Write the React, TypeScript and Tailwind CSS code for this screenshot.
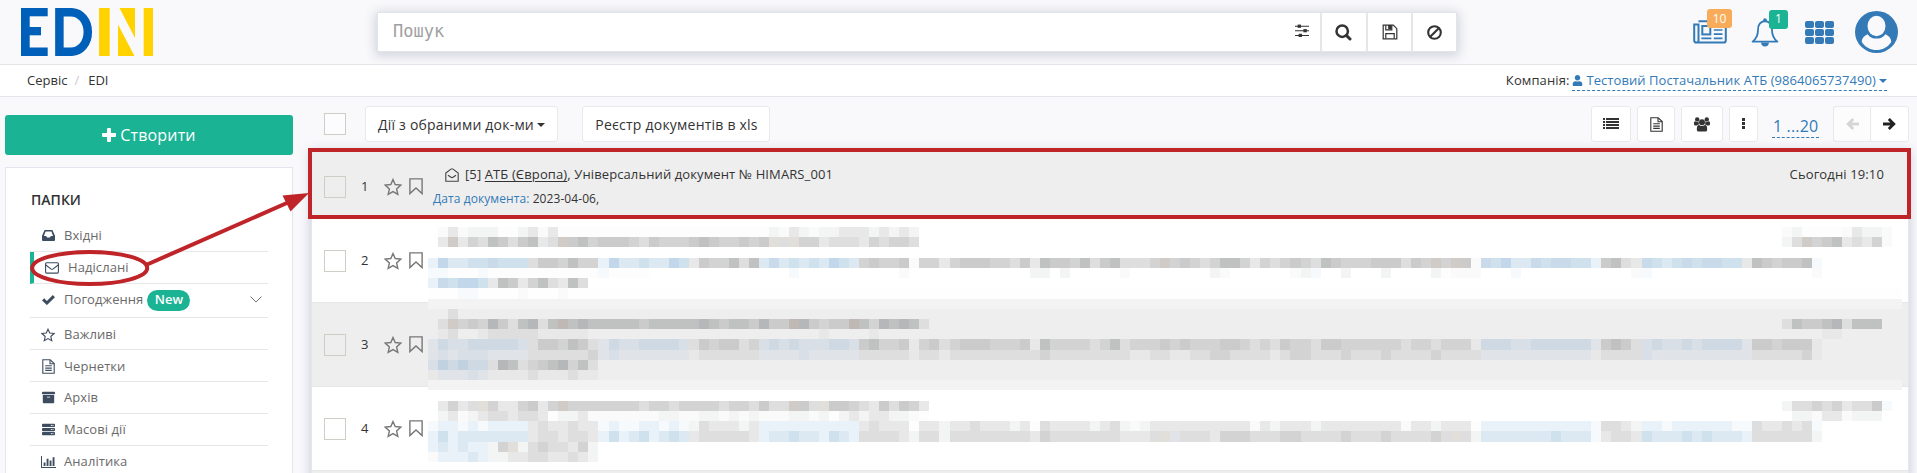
import type { ReactNode } from 'react';
import { FaArchive, FaServer, FaUser } from 'react-icons/fa';

/* ---------- icons ---------- */

function Logo() {
  return (
    <svg width="133" height="48" viewBox="0 0 133 48" aria-label="EDIN">
      <g fill="#005fb9">
        <rect x="0" y="0" width="8.7" height="48" />
        <rect x="0" y="0" width="26.7" height="8.3" />
        <rect x="0" y="19" width="20" height="8.3" />
        <rect x="0" y="39.5" width="26.7" height="8.5" />
      </g>
      <path d="M38.4 4.2H49.5C60 4.2 66.8 13 66.8 24S60 43.8 49.5 43.8H38.4Z" fill="none" stroke="#005fb9" strokeWidth="8.5" />
      <g fill="#ffd200">
        <rect x="78" y="0" width="10.7" height="48" />
        <polygon points="98.5,0 114,0 114,30" />
        <polygon points="97,16.5 97,48 113.5,48" />
        <rect x="122.7" y="0" width="9.3" height="48" />
      </g>
    </svg>
  );
}

function Sliders() {
  return (
    <svg width="14" height="14" viewBox="0 0 14 14" fill="#333">
      <path d="M0 1.7h14v1.1H0zM0 6.2h14v1.1H0zM0 10.9h14V12H0z" />
      <rect x="2.6" y=".6" width="3.4" height="3.2" />
      <rect x="8.4" y="5.1" width="3.4" height="3.2" />
      <rect x="3.6" y="9.8" width="3.4" height="3.2" />
    </svg>
  );
}

function Magnifier() {
  return (
    <svg width="17" height="17" viewBox="0 0 17 17" fill="none" stroke="#333" strokeWidth="2.5" strokeLinecap="round">
      <circle cx="7.2" cy="7.2" r="5.7" />
      <path d="M11.6 11.6 15 15" strokeWidth="3" />
    </svg>
  );
}

function Ban() {
  return (
    <svg width="15" height="15" viewBox="0 0 15 15" fill="none" stroke="#333" strokeWidth="2.1">
      <circle cx="7.5" cy="7.5" r="6.3" />
      <path d="M3.2 11.8 11.8 3.2" />
    </svg>
  );
}

function Floppy() {
  return (
    <svg width="16" height="16" viewBox="0 0 16 16" fill="none" stroke="#333" strokeWidth="1.2">
      <path d="M1.2 1.2H11.3L14.8 4.7V14.8H1.2Z" />
      <path d="M3.8 14.6V9.6H12.2V14.6" />
      <path d="M3.8 1.4V5.9H9.8V1.4" />
      <path d="M6.8 1.6h2.2v3H6.8z" fill="#333" />
    </svg>
  );
}

function Plus() {
  return (
    <svg width="14" height="14" viewBox="0 0 14 14" fill="#fff">
      <rect x="0" y="5" width="14" height="4" rx="1" />
      <rect x="5" y="0" width="4" height="14" rx="1" />
    </svg>
  );
}

function Arrow({ left }: { left?: boolean }) {
  return (
    <svg width="13" height="12" viewBox="0 0 13 12" fill="none" stroke="currentColor" strokeWidth="2.8" className={left ? 'rotate-180' : ''}>
      <path d="M0 6H10.5M5.8 1 10.8 6 5.8 11" />
    </svg>
  );
}

function ListIcon() {
  return (
    <svg width="16" height="12" viewBox="0 0 16 12" fill="#333" shapeRendering="crispEdges">
      <path d="M0 0h2v2H0zM3 0h13v2H3zM0 3h2v2H0zM3 3h13v2H3zM0 6h2v2H0zM3 6h13v2H3zM0 9h2v2H0zM3 9h13v2H3z" />
    </svg>
  );
}

function Group() {
  return (
    <svg width="16" height="15" viewBox="0 0 16 15" fill="#333">
      <circle cx="3.2" cy="2.4" r="2.2" />
      <circle cx="12.8" cy="2.4" r="2.2" />
      <path d="M0 7.2V5.8Q0 4.2 1.2 4.2Q3 5.4 4.6 4.6Q4.4 6.2 5.2 7.4Q3.6 7.4 2.8 8.4H1.4Q0 8.4 0 7.2ZM16 7.2V5.8Q16 4.2 14.8 4.2Q13 5.4 11.4 4.6Q11.6 6.2 10.8 7.4Q12.4 7.4 13.2 8.4H14.6Q16 8.4 16 7.2Z" />
      <circle cx="8" cy="5.2" r="3" />
      <path d="M2.8 12.4Q2.8 8 5 8Q8 10 11 8Q13.2 8 13.2 12.4Q13.2 14.6 11.4 14.6H4.6Q2.8 14.6 2.8 12.4Z" />
    </svg>
  );
}

function Tray() {
  return (
    <svg width="13" height="11" viewBox="0 0 13 11" fill="#3d4d5f" fillRule="evenodd">
      <path d="M2.6 0H10.4L13 5.8V10Q13 11 12 11H1Q0 11 0 10V5.8ZM3.6 1.6 1.9 5.9H4.2L5 7.5H8L8.8 5.9H11.1L9.4 1.6Z" />
    </svg>
  );
}

function Check() {
  return (
    <svg width="13" height="10" viewBox="0 0 13 10" fill="none" stroke="#3d4d5f" strokeWidth="3">
      <path d="M1.1 4.4 4.9 8 11.9 1.2" />
    </svg>
  );
}

function FileLines({ color }: { color: string }) {
  return (
    <svg width="13" height="15" viewBox="0 0 13 15" fill="none" stroke={color} strokeWidth="1.1">
      <path d="M.8.8H8.2L12.2 4.6V14.2H.8Z" />
      <path d="M8 .9V4.8H12.1M3.2 6.8h6.6M3.2 9.1h6.6M3.2 11.4h6.6" />
    </svg>
  );
}

function Envelope() {
  return (
    <svg width="14" height="12" viewBox="0 0 14 12" fill="none" stroke="#3d4d5f" strokeWidth="1.1">
      <rect x=".6" y=".7" width="12.8" height="10.4" rx="1" />
      <path d="M.8 3 5.8 6.9Q7 7.7 8.2 6.9L13.2 3" />
    </svg>
  );
}

function OpenEnvelope() {
  return (
    <svg width="14" height="14" viewBox="0 0 14 14" fill="none" stroke="#444" strokeWidth="1.1">
      <path d="M.8 5 6 1.1Q7 .4 8 1.1L13.2 5V13.2H.8Z" />
      <path d="M3 7.2 6 9.3Q7 10 8 9.3L11 7.2" />
    </svg>
  );
}

function Star({ size, color, width = 1.4 }: { size: number; color: string; width?: number }) {
  return (
    <svg width={size} height={size} viewBox="0 0 18 18" fill="none" stroke={color} strokeWidth={width}>
      <path d="M9 1.5 11.2 6.5 16.8 7.1 12.6 10.9 13.8 16.4 9 13.6 4.2 16.4 5.4 10.9 1.2 7.1 6.8 6.5Z" />
    </svg>
  );
}

function Bookmark() {
  return (
    <svg width="14" height="17" viewBox="0 0 14 17" fill="none" stroke="#777" strokeWidth="1.4">
      <path d="M.9.9H13.1V15.6L7 9.9.9 15.6Z" />
    </svg>
  );
}

function BarChart() {
  return (
    <svg width="15" height="12" viewBox="0 0 15 12" fill="#3d4d5f">
      <path d="M0 0h1v11h14v1H0zM2.6 6.5h1.9V10H2.6zM5.6 2.8h1.9V10H5.6zM8.6 4.4h1.9V10H8.6zM11.6 1.2h1.9V10h-1.9z" />
    </svg>
  );
}

function Newspaper() {
  return (
    <svg width="34" height="24" viewBox="0 0 34 24" fill="none" stroke="#337ab7" strokeWidth="2">
      <path d="M5.5 1.2H32.8V20.5Q32.8 22.6 30.7 22.6H3.4Q1.2 22.6 1.2 20.5V4.5H5.5V20.5Q5.5 22.6 3.6 22.6" />
      <rect x="9.3" y="6" width="8" height="8.4" />
      <path d="M20.8 10H29.5M20.8 14.2H29.5M8.4 18.3H18.4M20.8 18.3H29.5" strokeWidth="1.7" />
    </svg>
  );
}

function Bell() {
  return (
    <svg width="28" height="29" viewBox="0 0 28 29" fill="none" stroke="#337ab7" strokeWidth="1.8">
      <path d="M14 3.2C9 3.6 7 7.5 7 12C7 18 5 21 1.6 23.6H26.4C23 21 21 18 21 12C21 7.5 19 3.6 14 3.2Z" strokeLinejoin="round" />
      <path d="M10 24.6H18Q17.6 28.6 14 28.6T10 24.6Z" fill="#337ab7" stroke="none" />
      <circle cx="14" cy="2.2" r="1.9" fill="#337ab7" stroke="none" />
    </svg>
  );
}

function Avatar() {
  return (
    <svg width="43" height="42" viewBox="0 0 43 42">
      <ellipse cx="21.5" cy="21" rx="21.5" ry="21" fill="#337ab7" />
      <path d="M12.6 23.2C8.4 25 6.4 28.5 6.9 31.2C10.5 36.4 15.6 39 21.5 39S32.5 36.4 36.1 31.2C36.6 28.5 34.6 25 30.4 23.2C27.6 26.8 24.8 27.6 21.5 27.6S15.4 26.8 12.6 23.2Z" fill="#f9f9fb" />
      <ellipse cx="21.5" cy="15" rx="9" ry="10.2" fill="#f9f9fb" />
    </svg>
  );
}

function Caret({ color, width }: { color: string; width: number }) {
  return (
    <svg width={width} height="4" viewBox="0 0 8 4" preserveAspectRatio="none" fill={color}>
      <path d="M0 0h8L4 4z" />
    </svg>
  );
}

/* ---------- pixelated document details ---------- */

const SHADES: Record<string, string> = {
  z: '#fdfdfd', a: '#fafafa', b: '#f3f4f4', c: '#e8e8e9', d: '#dededf', e: '#d3d3d3', f: '#cbcbcb', g: '#c0c1c1', h: '#b6b7b8',
  v: '#bfb8b4', w: '#d1cbc8', x: '#e2deda',
  p: '#f7fafd', q: '#e9f1f9', r: '#dce8f2', s: '#d0e1ee', t: '#c9dbeb', u: '#c2d7e9',
  m: '#e0e4e8', n: '#d8dfe6', o: '#ced9e3', O: '#c2d1e0',
};

type Segment = [start: number, cells: string];

const MOSAIC: Record<number, Segment[]> = {
  0: [[1, 'acabbbzzbcaczzzzzzzzzzzzzzzzzzzzzbacbabbcccbcbcb'], [135, 'abzzzzacbba']],
  1: [[1, 'cwcedgfdfg' + 'cdwfgefffe' + 'dfeeefgfee' + 'fefxdxeecd' + 'ddcedeed'], [135, 'bdwefgcdcea']],
  3: [[0, 'qurrsstsssd' + 'ffegeequrr' + 'srruscfeeg' + 'dgrtrsrsru' + 'srefeefaee' + 'cefffeedfc' + 'gffegdfgdd' +
    'dewefedegg' + 'ecedefedgf' + 'eeefffdfew' + 'ewfatsurrt' + 'sttssqfgdc' + 'tsrststtss' + 'cgfeffgp']],
  4: [[0, 'ppzzzpzzzz'], [10, 'zzzzzzzpzzzz'], [36, 'p'], [47, 'a'], [60, 'bb'], [63, 'b'], [69, 'a'], [78, 'ba'], [86, 'abp'],
    [91, 'b'], [95, 'b'], [100, 'bzaaa'], [108, 'p'], [120, 'ap'], [138, 'a']],
  5: [[0, 'qtsuuscgfcegdcgd']],
  6: [[3, 'pp'], [9, 'a'], [13, 'a']],
  8: [[2, 'd']],
  9: [[1, 'dwefehfdgh' + 'dgvghggggg' + 'fggggghgfg' + 'gfhffvhfef' + 'fvgehghgd'], [135, 'dgffghdggg']],
  10: [[1, 'cd..cdddddccccc'], [39, 'c'], [44, 'c'], [139, 'cc']],
  11: [[0, 'monnooooond' + 'ffegfdmonn' + 'oooondfeff' + 'denononnno' + 'onfgeefcef' + 'defffeeefc' + 'geeeedegde' +
    'eefefeeeff' + 'ededfeedff' + 'eeeeeedeed' + 'eeecooonno' + 'ooooomfgfd' + 'nonnonoooo' + 'mffefffc']],
  12: [[0, 'mnmnnnmmmmd' + 'dddddemnmm' + 'mmmmmcdddd' + 'ddmmmmnmmm' + 'mmdddddcdd' + 'cddddddddd' + 'eddddddddc' +
    'cddccddeed' + 'dddcdeeddd' + 'edddedddde' + 'ddddmmmmmm' + 'mmmmmcdddd' + 'nmmmmmmmmm' + 'mdddddec']],
  13: [[0, 'nOoOoodhgdefghegd']],
  14: [[0, 'cmmmnmccccdcccdcc']],
  17: [[1, 'cecdxeccef' + 'ceweeeeeee' + 'deedeeeede' + 'edfddwfdxf' + 'fedcfdfec'], [135, 'bddedecddfp']],
  18: [[1, 'bcabcddcdd' + 'czbbcaaaaa' + 'aabbaabbab' + 'abaaabbabz' + 'bcbccbbaz'], [136, 'bbaccabbb']],
  19: [[0, 'pqqpqpqqqqc' + 'dccdccpqpp' + 'qqpqpbdccc' + 'bcqqqqqqqq' + 'qqcdccczcc' + 'bccdcccbcz' + 'dccccbcdba' +
    'bccccccccc' + 'cacbcccbcc' + 'ccccccaccb' + 'cccz' + 'qqqqqq' + 'qqqqqpddcb' + 'qqpqqqqqqp' + 'pdccdcdp']],
  20: [[0, 'qsqrrrrrrrc' + 'ddcddcqsqr' + 'sqrsrcdddd' + 'dcqrrsrrqs' + 'rqddddcbdd' + 'bddddddddc' + 'edddddddcc' +
    'cdxmdddcee' + 'edddeedddd' + 'edddedddde' + 'dxdbrrrrrr' + 'rsrrrpcddc' + 'srrrsrsrrr' + 'qddddddb']],
  21: [[0, 'qrqrqqbexbdeddceb']],
  22: [[0, 'aqqqrqbbccddccdcb']],
};

const cellX = (k: number) => Math.round(k * 10.029);
const cellY = (r: number) => Math.round(r * 10.217);

function Mosaic() {
  const cells: ReactNode[] = [];
  Object.entries(MOSAIC).forEach(([row, segments]) => {
    const r = Number(row);
    segments.forEach(([start, text]) => {
      text.split('').forEach((ch, i) => {
        if (ch === '.') return;
        const k = start + i;
        cells.push(
          <rect key={`${r}-${k}`} x={cellX(k)} y={cellY(r)} width={cellX(k + 1) - cellX(k)} height={cellY(r + 1) - cellY(r)} fill={SHADES[ch]} />,
        );
      });
    });
  });
  return (
    <svg className="absolute left-[428px] top-[227px]" width="1474" height="236" shapeRendering="crispEdges">
      <rect x="0" y="61" width="1474" height="11" fill="#fefefe" />
      <rect x="0" y="72" width="1474" height="91" fill="#eeeeee" />
      <rect x="0" y="72" width="1474" height="10" fill="#f3f3f3" />
      <rect x="0" y="153" width="1474" height="10" fill="#f3f3f3" />
      {cells}
    </svg>
  );
}

/* ---------- building blocks ---------- */

function SideItem({ icon, label, height, active, children }: {
  icon: ReactNode; label: string; height: string; active?: boolean; children?: ReactNode;
}) {
  return (
    <li className={`flex items-center border-b border-[#e7e7e7] text-[13px] text-[#6a6a6a] ${height} ${active ? 'border-l-4 border-l-[#1ab394] pl-[10px]' : 'pl-[10px]'}`}>
      <span className="flex w-4 shrink-0 justify-center text-[#3d4d5f]">{icon}</span>
      <span className="ml-2 tracking-[0.07px]">{label}</span>
      {children}
    </li>
  );
}

function ToolButton({ width, children }: { width: string; children: ReactNode }) {
  return (
    <button className={`flex h-9 items-center justify-center rounded-[3px] border border-[#e7eaec] bg-white text-[#333] ${width}`}>
      {children}
    </button>
  );
}

function Row({ n, gray, height, children }: { n: number; gray?: boolean; height: string; children?: ReactNode }) {
  return (
    <div className={`flex shrink-0 items-center border-b border-[#e4e7ea] ${height} ${gray ? 'bg-[#eeeeee]' : 'bg-white'}`}>
      <span className="ml-3 h-[22px] w-[22px] shrink-0 border border-[#d0cdc6]" />
      <span className="ml-[15px] w-[23px] shrink-0 text-[13px] text-[#333]">{n}</span>
      <span className="w-[25px] shrink-0"><Star size={18} color="#777" /></span>
      <span className="w-[19px] shrink-0"><Bookmark /></span>
      {children}
    </div>
  );
}

export default function App() {
  return (
    <div className="relative flex h-[473px] w-[1917px] flex-col overflow-hidden bg-[#f9f9fc] font-['Open_Sans','Noto_Sans',sans-serif] text-[#333]">
      <header className="flex h-[65px] shrink-0 items-center border-b border-[#e4e7ea] bg-[#f9f9fb]">
        <div className="ml-[21px] w-[356px] shrink-0"><Logo /></div>
        <div className="flex h-10 w-[1080px] shrink-0 border border-[#e1e4e9] bg-white shadow-[0_2px_10px_2px_rgba(75,80,125,0.22)]">
          <div className="flex flex-1 items-center pl-[15px] font-['DejaVu_Sans_Mono',monospace] text-[17px] text-[#a0a0a0]">Пошук</div>
          <div className="flex w-[38px] items-center justify-center border-r-2 border-[#e5e6e7] pb-[3px]"><Sliders /></div>
          <div className="flex w-[46px] items-center justify-center border-r-2 border-[#e5e6e7] pr-px"><Magnifier /></div>
          <div className="flex w-[45px] items-center justify-center border-r-2 border-[#e5e6e7]"><Floppy /></div>
          <div className="flex w-[43px] items-center justify-center"><Ban /></div>
        </div>
        <div className="ml-[236px] flex items-center">
          <span className="relative block h-6 w-[34px]">
            <Newspaper />
            <span className="absolute -top-[11px] left-[14px] flex h-[19px] w-[25px] items-center justify-center rounded-[3px] bg-[#f8ac59] text-[12px] text-white">10</span>
          </span>
          <span className="relative ml-[24px] block h-[29px] w-7">
            <Bell />
            <span className="absolute -top-[8px] left-[18px] flex h-[19px] w-[19px] items-center justify-center rounded-[3px] bg-[#1ab394] text-[12px] text-white">1</span>
          </span>
          <span className="ml-[26px] mt-px grid h-[23px] w-[29px] grid-cols-3 grid-rows-3 gap-[1.5px]">
            {Array.from({ length: 9 }, (_, i) => <i key={i} className="rounded-[2px] bg-[#337ab7]" />)}
          </span>
          <span className="ml-[21px]"><Avatar /></span>
        </div>
      </header>

      <nav className="flex h-8 shrink-0 items-center border-b border-[#e4e7ea] bg-white pl-[27px] pr-[30px] text-[13px]">
        <span>Сервіс</span>
        <span className="ml-[7px] text-[#ccc]">/</span>
        <span className="ml-[9px]">EDI</span>
        <span className="ml-auto tracking-[0.1px]">Компанія:</span>
        <span className="ml-[3px] flex h-[20px] items-center border-b border-dashed border-[#337ab7] pt-px tracking-[0.07px] text-[#337ab7]">
          <FaUser size={11} className="mr-[3px]" />
          Тестовий Постачальник АТБ (9864065737490)
          <span className="ml-[3px]"><Caret color="#337ab7" width={8} /></span>
        </span>
      </nav>

      <div className="flex min-h-0 flex-1">
        <aside className="ml-[5px] flex w-[288px] shrink-0 flex-col pt-[18px]">
          <button className="flex h-10 shrink-0 items-center justify-center rounded-[3px] bg-[#1ab394] text-[16px] tracking-[0.15px] text-white">
            <span className="mr-[4px]"><Plus /></span>Створити
          </button>
          <div className="mt-3 h-[330px] shrink-0 border border-[#e4e5f1] bg-white px-6">
            <h5 className="mt-[22px] pl-px text-[14px] font-semibold leading-5 text-[#333]">ПАПКИ</h5>
            <ul className="mt-[10px]">
              <SideItem icon={<Tray />} label="Вхідні" height="h-8" />
              <SideItem icon={<Envelope />} label="Надіслані" height="h-8" active />
              <SideItem icon={<Check />} label="Погодження" height="h-[34px] pb-[2px]">
                <span className="ml-[4px] mt-px flex h-[21px] w-[43px] items-center justify-center rounded-full bg-[#1ab394] text-[13px] font-semibold text-white">New</span>
                <svg className="ml-auto mr-[6px]" width="12" height="7" viewBox="0 0 12 7" fill="none" stroke="#777"><path d="M.5.5 6 6 11.5.5" /></svg>
              </SideItem>
              <SideItem icon={<Star size={14} color="#3d4d5f" />} label="Важливі" height="h-8 pt-[2px]" />
              <SideItem icon={<FileLines color="#3d4d5f" />} label="Чернетки" height="h-8 pt-[2px]" />
              <SideItem icon={<FaArchive size={13} />} label="Архів" height="h-8" />
              <SideItem icon={<FaServer size={13} />} label="Масові дії" height="h-8" />
              <SideItem icon={<BarChart />} label="Аналітика" height="h-8" />
            </ul>
          </div>
        </aside>

        <main className="ml-[18px] flex w-[1598px] shrink-0 flex-col pt-[9px]">
          <div className="flex h-9 shrink-0 items-center pl-[13px]">
            <span className="h-[22px] w-[22px] border border-[#d0cdc6] bg-white/50" />
            <div className="ml-[19px] flex">
              <ToolButton width="w-[193px] text-[14px] tracking-[0.2px]">Дії з обраними док-ми<span className="ml-[3px] mt-[2px] flex"><Caret color="#333" width={8} /></span></ToolButton>
            </div>
            <div className="ml-6 flex"><ToolButton width="w-[188px] pl-px text-[14px] tracking-[0.22px]">Реєстр документів в xls</ToolButton></div>
            <div className="ml-auto flex items-center">
              <ToolButton width="w-10"><ListIcon /></ToolButton>
              <div className="ml-1.5"><ToolButton width="w-[38px]"><FileLines color="#333" /></ToolButton></div>
              <div className="ml-1.5"><ToolButton width="w-[42px]"><Group /></ToolButton></div>
              <div className="ml-1.5"><ToolButton width="w-[29px]">
                <span className="flex flex-col gap-px pb-px">
                  {[0, 1, 2].map((i) => <i key={i} className="h-[3px] w-[3px] bg-[#333]" />)}
                </span>
              </ToolButton></div>
              <span className="ml-[14px] mt-[2px] h-[25px] w-[47px] whitespace-nowrap border-b border-dashed border-[#337ab7] pl-px text-[16px] leading-[26px] tracking-[0.15px] text-[#337ab7]">1 ...20</span>
              <div className="ml-[14px] flex">
                <span className="flex h-9 w-[37px] items-center justify-center rounded-l-[3px] border border-r-0 border-[#e7eaec] bg-[#fcfcfd] text-[#d5d5d5]"><Arrow left /></span>
                <span className="flex h-9 w-[39px] items-center justify-center rounded-r-[3px] border border-[#e7eaec] bg-white pr-px text-[#222]"><Arrow /></span>
              </div>
            </div>
          </div>

          <div className="mt-[8px] flex h-[340px] shrink-0 flex-col border border-[#e4e6ee] bg-[#eeeeee] shadow-[0_2px_10px_2px_rgba(75,80,125,0.22)]">
            <Row n={1} gray height="h-[68px] pt-[4px]">
              <div className="ml-[5px] flex flex-1 flex-col pt-px">
                <div className="flex h-6 items-center pl-[12px] pr-[24px] text-[13px] tracking-[0.11px]">
                  <OpenEnvelope />
                  <span className="ml-[6px]">[5] <u className="underline-offset-2">АТБ (Європа)</u>, Універсальний документ № HIMARS_001</span>
                  <span className="ml-auto tracking-[0.13px]">Сьогодні 19:10</span>
                </div>
                <div className="flex h-6 items-center text-[12px] tracking-[0.08px]">
                  <span className="text-[#337ab7]">Дата документа:</span>&nbsp;2023-04-06,
                </div>
              </div>
            </Row>
            <Row n={2} height="h-[84px]" />
            <Row n={3} gray height="h-[84px]" />
            <Row n={4} height="h-[84px]" />
          </div>
        </main>
      </div>

      <Mosaic />

      <div className="absolute left-[308px] top-[148px] h-[71px] w-[1603px] border-4 border-[#bf2429]" />
      <svg className="absolute left-0 top-[180px]" width="320" height="120" fill="none" stroke="#bf2429" strokeWidth="4">
        <ellipse cx="89.7" cy="88" rx="57.5" ry="16" />
        <path d="M146 85 288 22.5" />
        <path d="M282.5 15.5 309 13 290.5 31.5Z" fill="#bf2429" stroke="none" />
      </svg>
    </div>
  );
}
